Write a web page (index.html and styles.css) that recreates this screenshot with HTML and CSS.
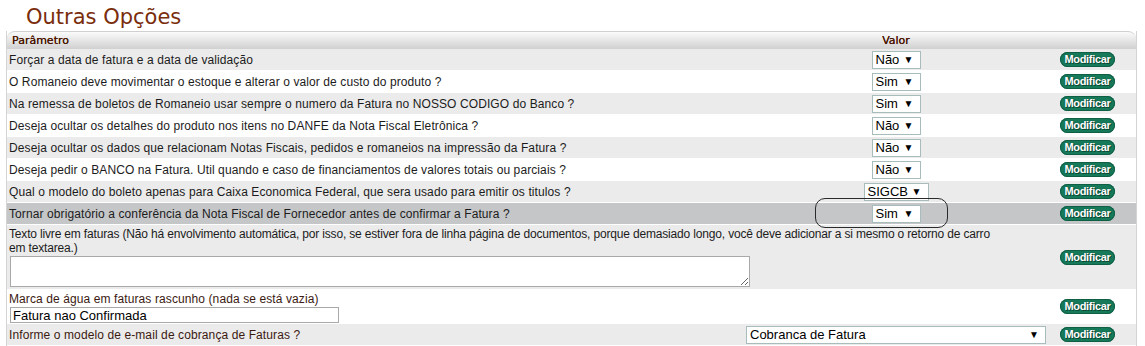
FILE: index.html
```html
<!DOCTYPE html>
<html lang="pt">
<head>
<meta charset="utf-8">
<title>Outras Opções</title>
<link rel="stylesheet" href="styles.css">
</head>
<body>
<div class="page">
  <h1 class="title">Outras Opções</h1>
  <div class="table-wrap">
    <table class="opts">
      <colgroup><col><col class="c-val"><col class="c-btn"></colgroup>
      <thead>
        <tr><th class="h-param">Parâmetro</th><th class="h-val">Valor</th><th class="h-btn"></th></tr>
      </thead>
      <tbody>
        <tr class="odd"><td class="param">Forçar a data de fatura e a data de validação</td><td class="val"><span class="sel w-nao"><span>Não</span><i>▼</i></span></td><td class="btn"><span class="mod">Modificar</span></td></tr>
        <tr class="even"><td class="param">O Romaneio deve movimentar o estoque e alterar o valor de custo do produto ?</td><td class="val"><span class="sel w-nao"><span>Sim</span><i>▼</i></span></td><td class="btn"><span class="mod">Modificar</span></td></tr>
        <tr class="odd"><td class="param">Na remessa de boletos de Romaneio usar sempre o numero da Fatura no NOSSO CODIGO do Banco ?</td><td class="val"><span class="sel w-nao"><span>Sim</span><i>▼</i></span></td><td class="btn"><span class="mod">Modificar</span></td></tr>
        <tr class="even"><td class="param">Deseja ocultar os detalhes do produto nos itens no DANFE da Nota Fiscal Eletrônica ?</td><td class="val"><span class="sel w-nao"><span>Não</span><i>▼</i></span></td><td class="btn"><span class="mod">Modificar</span></td></tr>
        <tr class="odd"><td class="param">Deseja ocultar os dados que relacionam Notas Fiscais, pedidos e romaneios na impressão da Fatura ?</td><td class="val"><span class="sel w-nao"><span>Não</span><i>▼</i></span></td><td class="btn"><span class="mod">Modificar</span></td></tr>
        <tr class="even"><td class="param">Deseja pedir o BANCO na Fatura. Util quando e caso de financiamentos de valores totais ou parciais ?</td><td class="val"><span class="sel w-nao"><span>Não</span><i>▼</i></span></td><td class="btn"><span class="mod">Modificar</span></td></tr>
        <tr class="odd"><td class="param">Qual o modelo do boleto apenas para Caixa Economica Federal, que sera usado para emitir os titulos ?</td><td class="val"><span class="sel w-sig"><span>SIGCB</span><i>▼</i></span></td><td class="btn"><span class="mod">Modificar</span></td></tr>
        <tr class="hl"><td class="param">Tornar obrigatório a conferência da Nota Fiscal de Fornecedor antes de confirmar a Fatura ?</td><td class="val"><span class="sel w-nao"><span>Sim</span><i>▼</i></span></td><td class="btn"><span class="mod">Modificar</span></td></tr>
        <tr class="odd tall"><td class="param" colspan="2"><div class="cond">Texto livre em faturas (Não há envolvimento automática, por isso, se estiver fora de linha página de documentos, porque demasiado longo, você deve adicionar a si mesmo o retorno de carro<br>em textarea.)</div><textarea class="ta"></textarea></td><td class="btn"><span class="mod">Modificar</span></td></tr>
        <tr class="even mid"><td class="param dark" colspan="2"><div>Marca de água em faturas rascunho (nada se está vazia)</div><input class="inp" type="text" value="Fatura nao Confirmada"></td><td class="btn"><span class="mod">Modificar</span></td></tr>
        <tr class="odd"><td class="param dark">Informe o modelo de e-mail de cobrança de Faturas ?</td><td class="val"><span class="sel w-big"><span>Cobranca de Fatura</span><i>▼</i></span></td><td class="btn"><span class="mod">Modificar</span></td></tr>
      </tbody>
    </table>
    <div class="mark"></div>
  </div>
</div>
</body>
</html>
```
FILE: styles.css
```css
html, body { margin: 0; padding: 0; background: #fff; }
.page { padding: 0 0 0 6px; width: 1131px; }
.title {
  margin: 0; padding: 6px 0 0 20px; height: 25px;
  font-family: "DejaVu Sans", sans-serif; font-weight: normal;
  font-size: 21px; line-height: 22px; color: #7a2d0c;
}
.table-wrap { position: relative; }
.opts {
  width: 1131px; border-collapse: separate; border-spacing: 0;
  font-family: "Liberation Sans", Arial, sans-serif; font-size: 12px; color: #1c1c1c;
  border-left: 1px solid #d4d4d4; border-right: 1px solid #d4d4d4;
  table-layout: fixed; letter-spacing: 0.1px;
}
.c-val { width: 300px; }
.c-btn { width: 90px; }
.opts thead th {
  height: 17px; padding: 0; font-family: "DejaVu Sans", sans-serif; font-size: 11px;
  font-weight: normal; color: #4a1500; line-height: 16px; letter-spacing: 0;
  background: linear-gradient(#fbfbfb, #d0d0d0);
  border-top: 1px solid #d0d0d0;
  text-shadow: 0 0 0.4px #4a1500;
}
.h-param { text-align: left; padding-left: 5px !important; border-top-left-radius: 8px; }
.h-val { text-align: center; }
.h-btn { border-top-right-radius: 8px; }
.opts td { padding: 0; height: 21px; vertical-align: middle; box-sizing: border-box; }
tr.odd td { background: #ebebeb; }
tr.even td { background: #fff; }
tr.hl td { background: #c4c6c8; }
tr.odd td, tr.even td, tr.hl td { border-bottom: 1px solid #fff; }
.opts tbody tr:not(.tall):not(.mid) td { height: 22px; }
.opts tbody tr.hl td { height: 23px; }
.param { padding-left: 2px !important; white-space: nowrap; }
.dark { color: #3b1a12; }
.val { text-align: center; }
.btn { text-align: left; padding-left: 14px !important; }
.sel {
  display: inline-flex; align-items: center; justify-content: space-between;
  box-sizing: border-box; height: 18px; background: #fff;
  border: 1px solid #a9bcbc; padding: 0 6px 0 3px;
  font-family: "Liberation Sans", Arial, sans-serif; font-size: 13px; color: #000;
  vertical-align: middle; letter-spacing: 0;
}
.sel i { font-style: normal; font-size: 10px; }
.w-nao { width: 49px; }
.w-sig { width: 65px; }
.w-big { width: 300px; }
.mod {
  display: inline-block; width: 55px; height: 15px; border-radius: 8px;
  background: #16795a; color: #fff; text-align: center;
  font-family: "Liberation Sans", Arial, sans-serif; font-weight: bold; font-size: 11px;
  line-height: 15px; letter-spacing: -0.3px;
  text-shadow: 0 0 1px #0a3d2b, 1px 1px 0 #0b4a33;
  box-shadow: inset 0 0 0 1px #0f5f45;
  vertical-align: middle;
}
.opts tbody tr.tall td { height: 62px; }
.tall .param { vertical-align: top; padding-top: 2px !important; }
.cond { font-size: 12px; line-height: 14px; letter-spacing: -0.17px; white-space: nowrap; }
.ta {
  display: block; box-sizing: border-box; width: 740px; height: 31px; margin: 1px 0 2px 1px;
  border: 1px solid #a9a9a9; resize: both; font: 12px "Liberation Sans", Arial, sans-serif;
}
.opts tbody tr.mid td { height: 33px; }
.mid .param { vertical-align: top; padding-top: 2px !important; line-height: 14px; }
.inp {
  display: block; box-sizing: border-box; width: 329px; height: 16px; margin: 1px 0 0 1px;
  border: 1px solid #a9a9a9; padding: 0 2px; font: 13px "Liberation Sans", Arial, sans-serif; color: #000;
}
.mark {
  position: absolute; left: 809px; top: 167px; width: 131px; height: 28px;
  border: 1px solid #2a2a2a; border-radius: 10px; pointer-events: none;
}
```
